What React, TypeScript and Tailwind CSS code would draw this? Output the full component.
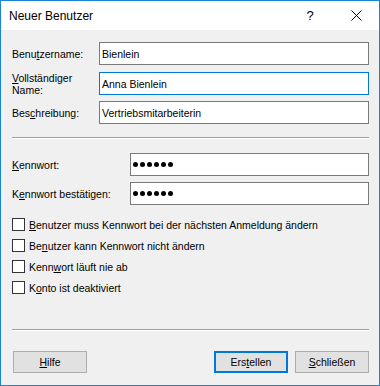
import React from "react";

const U = ({ children }: { children: React.ReactNode }) => (
  <span className="underline underline-offset-[1px] decoration-[1px]">{children}</span>
);

const Input = ({ value, focused, className = "" }: { value?: string; focused?: boolean; className?: string }) => (
  <div
    className={`h-[23px] bg-white border flex items-center px-[2px] ${focused ? "border-[#0078d7]" : "border-[#7a7a7a]"} ${className}`}
  >
    {value}
  </div>
);

const Dots = () => (
  <div className="h-[23px] flex-1 bg-white border border-[#7a7a7a] flex items-center pl-[2px] gap-[2px]">
    {[0, 1, 2, 3, 4, 5].map((i) => (
      <div key={i} className="w-[5px] h-[5px] rounded-full bg-black" />
    ))}
  </div>
);

const Check = ({ children }: { children: React.ReactNode }) => (
  <div className="h-[21px] flex items-center">
    <div className="w-[13px] h-[13px] border border-[#333333] bg-white mr-[4px]" />
    <span>{children}</span>
  </div>
);

const Sep = ({ className = "" }: { className?: string }) => (
  <div className={`h-[2px] border-t border-[#a0a0a0] border-b border-b-white ${className}`} />
);

const Btn = ({ children, def }: { children: React.ReactNode; def?: boolean }) => (
  <div
    className={`w-[74px] h-[22px] bg-[#e1e1e1] flex items-center justify-center ${def ? "border-2 border-[#0078d7]" : "border border-[#adadad]"}`}
  >
    {children}
  </div>
);

export default function App() {
  return (
    <div className="w-[380px] h-[386px] border border-[#1883d7] bg-[#f0f0f0] flex flex-col text-black text-[10.5px] font-['Liberation_Sans',Arial,sans-serif] leading-[12px]">
      <div className="h-[29px] bg-white flex items-center pl-[8px] shrink-0">
        <span className="text-[12px] font-['Liberation_Sans',sans-serif] flex-1">Neuer Benutzer</span>
        <span className="text-[13px] w-[14px] mr-[34px] text-center">?</span>
        <svg width="11" height="11" viewBox="0 0 11 11" className="mr-[17px]">
          <path d="M0.5 0.5 L10.5 10.5 M10.5 0.5 L0.5 10.5" stroke="#000" strokeWidth="1" />
        </svg>
      </div>
      <div className="flex flex-col pl-[11px] pr-[10px]">
        <div className="flex items-center h-[23px] mt-[12px]">
          <div className="w-[87px]">
            Benu<U>t</U>zername:
          </div>
          <Input value="Bienlein" className="flex-1" />
        </div>
        <div className="flex items-center h-[23px] mt-[7px]">
          <div className="w-[87px]">
            <U>V</U>ollständiger
            <br />
            Name:
          </div>
          <Input value="Anna Bienlein" focused className="flex-1" />
        </div>
        <div className="flex items-center h-[23px] mt-[6px]">
          <div className="w-[87px]">
            Bes<U>c</U>hreibung:
          </div>
          <Input value="Vertriebsmitarbeiterin" className="flex-1" />
        </div>
        <Sep className="mt-[13px]" />
        <div className="flex items-center h-[23px] mt-[14px]">
          <div className="w-[118px]">
            <U>K</U>ennwort:
          </div>
          <Dots />
        </div>
        <div className="flex items-center h-[23px] mt-[6px]">
          <div className="w-[118px]">
            K<U>e</U>nnwort bestätigen:
          </div>
          <Dots />
        </div>
        <div className="flex flex-col mt-[9px]">
          <Check>
            <U>B</U>enutzer muss Kennwort bei der nächsten Anmeldung ändern
          </Check>
          <Check>
            Be<U>n</U>utzer kann Kennwort nicht ändern
          </Check>
          <Check>
            Kenn<U>w</U>ort läuft nie ab
          </Check>
          <Check>
            K<U>o</U>nto ist deaktiviert
          </Check>
        </div>
        <Sep className="mt-[31px]" />
        <div className="flex items-center mt-[20px] pl-[1px]">
          <Btn>
            <U>H</U>ilfe
          </Btn>
          <div className="flex-1" />
          <Btn def>
            Ers<U>t</U>ellen
          </Btn>
          <div className="w-[7px]" />
          <Btn>
            <U>S</U>chließen
          </Btn>
        </div>
      </div>
    </div>
  );
}
